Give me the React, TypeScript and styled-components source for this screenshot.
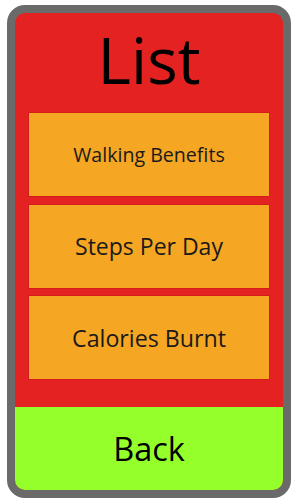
import styled, { createGlobalStyle } from "styled-components";

const GlobalStyle = createGlobalStyle`
  html, body {
    margin: 0;
    padding: 0;
    background: #ffffff;
  }
  body {
    font-family: "Open Sans", "Noto Sans", sans-serif;
  }
`;

const Page = styled.div`
  padding: 5px 0 0 7px;
`;

const Frame = styled.div`
  width: 284px;
  height: 493px;
  box-sizing: border-box;
  border: 8px solid #6a6a6a;
  border-radius: 18px;
  overflow: hidden;
  display: flex;
  flex-direction: column;
  background: #e52222;
`;

const Panel = styled.div`
  flex: 1;
  display: flex;
  flex-direction: column;
  padding: 0 13px 27px;
`;

const Title = styled.h1`
  height: 99px;
  margin: 0;
  display: flex;
  align-items: center;
  justify-content: center;
  font-size: 64px;
  font-weight: 400;
  color: #000;
  line-height: 1;
  padding-bottom: 6px;
  box-sizing: border-box;
`;

const List = styled.div`
  display: flex;
  flex-direction: column;
  gap: 6.5px;
`;

const Item = styled.div<{ $size: number }>`
  height: 85px;
  box-sizing: border-box;
  border: 1px solid #d41c1c;
  background: #f5a623;
  display: flex;
  align-items: center;
  justify-content: center;
  font-size: ${(p) => p.$size}px;
  color: #1a1a1a;
`;

const BackButton = styled.div`
  height: 84px;
  background: #94ff2b;
  display: flex;
  align-items: center;
  justify-content: center;
  font-size: 32.5px;
  color: #000;
`;

const items = [
  { label: "Walking Benefits", size: 19.6 },
  { label: "Steps Per Day", size: 23 },
  { label: "Calories Burnt", size: 23.2 },
];

export default function App() {
  return (
    <>
      <GlobalStyle />
      <Page>
        <Frame>
          <Panel>
            <Title>List</Title>
            <List>
              {items.map((it) => (
                <Item key={it.label} $size={it.size}>
                  {it.label}
                </Item>
              ))}
            </List>
          </Panel>
          <BackButton>Back</BackButton>
        </Frame>
      </Page>
    </>
  );
}
